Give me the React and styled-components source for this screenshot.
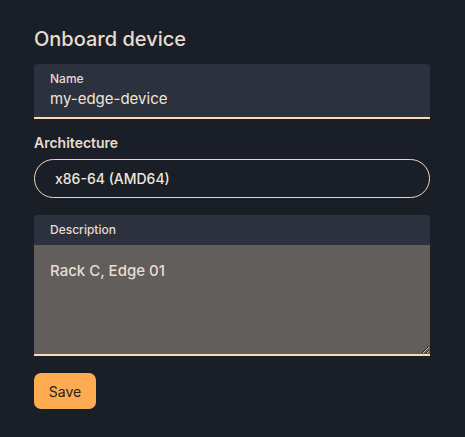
import * as React from "react"
import styled, { createGlobalStyle } from 'styled-components'

const Global = createGlobalStyle`
html, body {
  margin: 0;
  background: #1a1f27;
}
body {
  font-family: Inter, "Noto Sans", sans-serif;
  color: #e6dccf;
}
`

const Page = styled.div`
width: 465px;
height: 437px;
box-sizing: border-box;
padding: 26px 35px 0 34px;
display: flex;
flex-direction: column;
`

const Title = styled.h2`
margin: 0 0 12px;
font-size: 20px;
font-weight: 500;
line-height: 26px;
color: #e6dccf;
`

const Field = styled.div`
display: flex;
flex-direction: column;
background: #2c323d;
border-radius: 4px 4px 0 0;
border-bottom: 2px solid #ffd9b6;
padding: 8px 16px 7px;
`

const SmallLabel = styled.label`
font-size: 12px;
font-weight: 500;
line-height: 14px;
color: #e6dccf;
`

const Value = styled.input`
all: unset;
font-family: inherit;
font-size: 15px;
line-height: 22px;
color: #efe6da;
margin-top: 2px;
`

const GroupLabel = styled.div`
margin-top: 15px;
font-size: 14px;
font-weight: 600;
line-height: 18px;
color: #e6dccf;
`

const Select = styled.div`
margin-top: 7px;
height: 39px;
box-sizing: border-box;
border: 1px solid #f0d6bf;
border-radius: 20px;
display: flex;
align-items: center;
padding: 0 20px;
font-size: 14px;
font-weight: 500;
color: #efe6da;
`

const Area = styled.div`
margin-top: 17px;
display: flex;
flex-direction: column;
border-radius: 4px 4px 0 0;
overflow: hidden;
`

const AreaHead = styled.div`
background: #2c323d;
height: 30px;
display: flex;
align-items: center;
padding: 0 16px;
`

const Text = styled.textarea`
display: block;
height: 111px;
box-sizing: border-box;
background: #625e5b;
border: none;
border-bottom: 2px solid #ffd9b6;
padding: 16px 16px;
margin: 0;
font-family: inherit;
font-size: 15px;
font-weight: 500;
color: #e8ddd2;
resize: vertical;
outline: none;
`

const Button = styled.button`
margin-top: 17px;
align-self: flex-start;
width: 62px;
height: 36px;
border: none;
border-radius: 7px;
background: #ffab52;
color: #2a2118;
font-family: inherit;
font-size: 14px;
`

const App = () => {
  return (
    <Page>
      <Global />
      <Title>Onboard device</Title>
      <Field>
        <SmallLabel>Name</SmallLabel>
        <Value defaultValue="my-edge-device" />
      </Field>
      <GroupLabel>Architecture</GroupLabel>
      <Select>x86-64 (AMD64)</Select>
      <Area>
        <AreaHead><SmallLabel>Description</SmallLabel></AreaHead>
        <Text defaultValue="Rack C, Edge 01" />
      </Area>
      <Button>Save</Button>
    </Page>
  )
}

export default App
